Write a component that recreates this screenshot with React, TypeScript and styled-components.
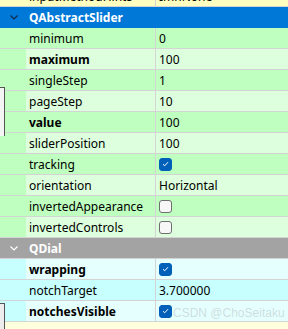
import React from 'react';
import styled, { createGlobalStyle } from 'styled-components';

type Tone = 'green' | 'cyan' | 'yellow';

const palette: Record<Tone, { base: string; alt: string }> = {
  green: { base: '#bfffbf', alt: '#ddffdd' },
  cyan: { base: '#c7ffff', alt: '#e5ffff' },
  yellow: { base: '#ffffbf', alt: '#ffffdd' },
};

type Value = string | boolean;

interface Prop {
  name: string;
  value: Value;
  changed?: boolean;
}

interface Section {
  title: string;
  tone: Tone;
  selected?: boolean;
  props: Prop[];
}

const sections: Section[] = [
  {
    title: 'QAbstractSlider',
    tone: 'green',
    selected: true,
    props: [
      { name: 'minimum', value: '0' },
      { name: 'maximum', value: '100', changed: true },
      { name: 'singleStep', value: '1' },
      { name: 'pageStep', value: '10' },
      { name: 'value', value: '100', changed: true },
      { name: 'sliderPosition', value: '100' },
      { name: 'tracking', value: true },
      { name: 'orientation', value: 'Horizontal' },
      { name: 'invertedAppearance', value: false },
      { name: 'invertedControls', value: false },
    ],
  },
  {
    title: 'QDial',
    tone: 'cyan',
    props: [
      { name: 'wrapping', value: true, changed: true },
      { name: 'notchTarget', value: '3.700000' },
      { name: 'notchesVisible', value: true, changed: true },
    ],
  },
];

const GlobalStyle = createGlobalStyle`
  html, body {
    margin: 0;
    padding: 0;
  }
  body {
    width: 288px;
    height: 329px;
    overflow: hidden;
    background: #ffffdd;
    font-family: "Noto Sans", "Open Sans", sans-serif;
    font-size: 12px;
    color: #000;
  }
`;

const Browser = styled.div`
  position: relative;
  width: 288px;
  height: 329px;
  overflow: hidden;
`;

const List = styled.div`
  display: flex;
  flex-direction: column;
  margin-top: -14px;
`;

const Row = styled.div<{ $tone: Tone; $alt: boolean }>`
  display: grid;
  grid-template-columns: 156px 1fr;
  height: 20px;
  border-bottom: 1px solid #d4d4d4;
  background: ${({ $tone, $alt }) => ($alt ? palette[$tone].alt : palette[$tone].base)};
`;

const NameCell = styled.div<{ $tone: Tone }>`
  display: flex;
  align-items: center;
  border-right: 1px solid #d4d4d4;
  overflow: hidden;

  &::before {
    content: '';
    flex: 0 0 26px;
    align-self: stretch;
    background: ${({ $tone }) => palette[$tone].base};
  }
`;

const Label = styled.span<{ $bold?: boolean }>`
  padding-left: 3px;
  white-space: nowrap;
  font-weight: ${({ $bold }) => ($bold ? 700 : 400)};
`;

const ValueCell = styled.div`
  display: flex;
  align-items: center;
  padding-left: 3px;
  white-space: nowrap;
  overflow: hidden;
`;

const Header = styled.div<{ $selected?: boolean }>`
  display: flex;
  align-items: center;
  height: 20px;
  border-bottom: 1px solid ${({ $selected }) => ($selected ? '#0078d7' : '#d4d4d4')};
  background: ${({ $selected }) => ($selected ? '#0078d7' : '#a3a3a3')};
  color: #fff;
  font-weight: 700;
`;

const Chevron = styled.span`
  display: flex;
  width: 29px;
  padding-left: 10px;
  box-sizing: border-box;
`;

const Box = styled.span<{ $checked: boolean }>`
  display: flex;
  align-items: center;
  justify-content: center;
  width: 13px;
  height: 13px;
  box-sizing: border-box;
  border-radius: 3px;
  background: ${({ $checked }) => ($checked ? '#005fb8' : '#f7f7f7')};
  border: 1px solid ${({ $checked }) => ($checked ? '#005fb8' : '#6e6e6e')};
`;

const Watermark = styled.div`
  position: absolute;
  left: 173px;
  top: 306px;
  font-family: "Liberation Sans", Arial, sans-serif;
  font-size: 12px;
  color: rgba(170, 170, 170, 0.4);
  white-space: nowrap;
`;

// edges of a window lying behind the panel
const FrameEdge = styled.div<{ $top: number; $height: number; $fill: string }>`
  position: absolute;
  left: 0;
  top: ${({ $top }) => $top}px;
  width: 4px;
  height: ${({ $height }) => $height}px;
  background: ${({ $fill }) => $fill};
  border-top: 1px solid #555;
  border-right: 1px solid #555;
`;

const CheckBox: React.FC<{ checked: boolean }> = ({ checked }) => (
  <Box $checked={checked}>
    {checked && (
      <svg width="7" height="6" viewBox="0 0 7 6">
        <path d="M1 3.2 L2.7 4.8 L6 1.2" fill="none" stroke="#fff" strokeWidth="1" />
      </svg>
    )}
  </Box>
);

const App: React.FC = () => {
  let index = 0;
  return (
    <Browser>
      <GlobalStyle />
      <List>
        <Row $tone="yellow" $alt={false}>
          <NameCell $tone="yellow">
            <Label>inputMethodHints</Label>
          </NameCell>
          <ValueCell>ImhNone</ValueCell>
        </Row>
        {sections.map((section) => {
          const header = (
            <Header key={section.title} $selected={section.selected}>
              <Chevron>
                <svg width="8" height="5" viewBox="0 0 8 5">
                  <path
                    d="M0.5 0.5 L4 4 L7.5 0.5"
                    fill="none"
                    stroke={section.selected ? '#10294a' : '#fff'}
                    strokeWidth="1.2"
                  />
                </svg>
              </Chevron>
              {section.title}
            </Header>
          );
          const rows = section.props.map((p) => {
            const alt = index % 2 === 1;
            index += 1;
            return (
              <Row key={p.name} $tone={section.tone} $alt={alt}>
                <NameCell $tone={section.tone}>
                  <Label $bold={p.changed}>{p.name}</Label>
                </NameCell>
                <ValueCell>
                  {typeof p.value === 'boolean' ? <CheckBox checked={p.value} /> : p.value}
                </ValueCell>
              </Row>
            );
          });
          index += 1;
          return (
            <React.Fragment key={section.title}>
              {header}
              {rows}
            </React.Fragment>
          );
        })}
      </List>
      <FrameEdge $top={87} $height={48} $fill="#f4f4f4" />
      <FrameEdge $top={303} $height={30} $fill="#ededed" />
      <Watermark>CSDN @ChoSeitaku</Watermark>
    </Browser>
  );
};

export default App;
